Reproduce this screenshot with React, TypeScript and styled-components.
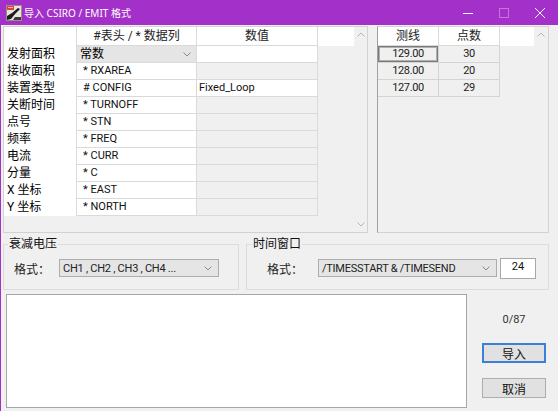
import React from "react";
import styled, { createGlobalStyle } from "styled-components";

const GlobalStyle = createGlobalStyle`
  html, body {
    margin: 0;
    padding: 0;
    background: #f0f0f0;
  }
  body {
    font-family: Roboto, "Noto Sans CJK SC", sans-serif;
    font-size: 12px;
    color: #000;
  }
  * {
    box-sizing: border-box;
  }
`;

const PURPLE = "#a230c9";

const Window = styled.div`
  width: 558px;
  height: 411px;
  border-left: 1px solid ${PURPLE};
  background: #f0f0f0;
  display: flex;
  flex-direction: column;
  overflow: hidden;
`;

const TitleBar = styled.div`
  height: 25px;
  flex: none;
  background: ${PURPLE};
  color: #fff;
  display: flex;
  align-items: center;
  padding-left: 5px;
`;

const TitleText = styled.span`
  margin-left: 2px;
  font-family: "Noto Sans", "Noto Sans CJK SC", sans-serif;
  font-size: 10px;
  line-height: 14px;
  flex: 1;
`;

const Controls = styled.div`
  display: flex;
  align-items: center;
  height: 100%;
`;

const ControlBtn = styled.div<{ $dim?: boolean }>`
  width: 36px;
  height: 100%;
  display: flex;
  align-items: center;
  justify-content: center;
  opacity: ${(p) => (p.$dim ? 0.35 : 1)};
`;

const Body = styled.div`
  flex: 1;
  padding: 1px 0 0 2px;
  display: flex;
  flex-direction: column;
`;

const TopRow = styled.div`
  display: flex;
  gap: 9px;
  height: 207px;
`;

const LeftGrid = styled.div`
  width: 365px;
  height: 100%;
  border: 1px solid #d2d2d2;
  background: #f0f0f0;
  display: flex;
`;

const RightGrid = styled.div`
  width: 172px;
  height: 100%;
  border: 1px solid #d2d2d2;
  border-left-color: #a0a0a0;
  background: #f0f0f0;
  display: flex;
`;

const TableArea = styled.div<{ $w: number }>`
  width: ${(p) => p.$w}px;
  display: flex;
  flex-direction: column;
`;

const TableRow = styled.div<{ $cols: string; $h: number }>`
  display: grid;
  grid-template-columns: ${(p) => p.$cols};
  height: ${(p) => p.$h}px;
`;

const HeadCell = styled.div<{ $noBottom?: boolean; $last?: boolean }>`
  background: #fff;
  border-right: ${(p) => (p.$last ? "none" : "1px solid #dadada")};
  border-bottom: ${(p) => (p.$noBottom ? "none" : "1px solid #dadada")};
  text-align: center;
  line-height: 18px;
  color: #222;
  white-space: nowrap;
`;

const LabelCell = styled.div`
  background: #fff;
  border-right: 1px solid #dadada;
  padding-left: 3px;
  line-height: 16px;
  white-space: nowrap;
`;

const FieldCell = styled.div`
  background: #fff;
  border-right: 1px solid #dadada;
  border-bottom: 1px solid #dadada;
  padding-left: 6px;
  font-size: 11px;
  line-height: 16px;
  color: #111;
  white-space: nowrap;
`;

const ValueCell = styled.div<{ $white?: boolean }>`
  background: ${(p) => (p.$white ? "#fff" : "#f0f0f0")};
  border-right: 1px solid #dadada;
  border-bottom: 1px solid #dadada;
  padding-left: 2px;
  font-size: 11px;
  line-height: 16px;
  color: #111;
  white-space: nowrap;
`;

const CellCombo = styled.div`
  background: #e5e5e5;
  border-right: 1px solid #dadada;
  border-bottom: 1px solid #dadada;
  display: flex;
  align-items: center;
  justify-content: space-between;
  padding: 0 5px 0 3px;
  line-height: 16px;
`;

const DataCell = styled.div<{ $selected?: boolean }>`
  background: #f0f0f0;
  border-right: 1px solid #d4d4d4;
  border-bottom: 1px solid #d4d4d4;
  text-align: center;
  font-size: 11px;
  letter-spacing: -0.4px;
  line-height: 16px;
  color: #222;
  box-shadow: ${(p) => (p.$selected ? "inset 0 0 0 1px #7a7a7a, inset 0 0 0 2px #b0b0b0" : "none")};
`;

const ScrollBar = styled.div<{ $w: number }>`
  width: ${(p) => p.$w}px;
  display: flex;
  flex-direction: column;
  justify-content: space-between;
  align-items: center;
  padding: 5px 0 5px;
`;

const GroupsRow = styled.div`
  display: flex;
  gap: 7px;
  margin-top: 4px;
`;

const Group = styled.fieldset<{ $w: number }>`
  width: ${(p) => p.$w}px;
  height: 53px;
  margin: 0;
  padding: 6px 0 0 0;
  border: 1px solid #dcdcdc;
  min-width: 0;
`;

const Legend = styled.legend`
  font-size: 12px;
  line-height: 14px;
  padding: 0 1px;
  margin-left: 4px;
  color: #111;
`;

const FieldRow = styled.div<{ $pl: number }>`
  display: flex;
  align-items: center;
  height: 22px;
  padding-left: ${(p) => p.$pl}px;
`;

const FieldLabel = styled.span<{ $w: number }>`
  width: ${(p) => p.$w}px;
  color: #222;
`;

const Combo = styled.div<{ $w: number }>`
  width: ${(p) => p.$w}px;
  height: 18px;
  background: #e5e5e5;
  border: 1px solid #adadad;
  display: flex;
  align-items: center;
  justify-content: space-between;
  padding: 0 6px 0 3px;
  font-size: 11px;
  letter-spacing: -0.25px;
  color: #222;
  white-space: nowrap;
  overflow: hidden;
`;

const NumBox = styled.div`
  width: 36px;
  height: 21px;
  margin-left: 3px;
  background: #fff;
  border: 1px solid #a8a8a8;
  text-align: center;
  font-size: 11px;
  line-height: 16px;
  color: #111;
`;

const BottomRow = styled.div`
  display: flex;
  margin-top: 4px;
`;

const LogBox = styled.div`
  width: 461px;
  height: 114px;
  margin-left: 3px;
  background: #fff;
  border: 1px solid #a6a6a6;
`;

const SidePanel = styled.div`
  width: 64px;
  margin-left: 15px;
  display: flex;
  flex-direction: column;
  align-items: center;
`;

const Counter = styled.div`
  margin-top: 18px;
  font-size: 11px;
  line-height: 16px;
  color: #333;
`;

const Button = styled.div<{ $primary?: boolean }>`
  width: 64px;
  height: 20px;
  margin-top: 15px;
  background: #e1e1e1;
  border: ${(p) => (p.$primary ? "2px solid #3b7fd6" : "1px solid #adadad")};
  display: flex;
  align-items: center;
  justify-content: center;
  color: #111;
`;

const Chevron = ({ up = false, color = "#8a8a8a" }: { up?: boolean; color?: string }) => (
  <svg width="8" height="5" viewBox="0 0 8 5">
    <polyline
      points={up ? "0.5,4.5 4,1 7.5,4.5" : "0.5,0.5 4,4 7.5,0.5"}
      fill="none"
      stroke={color}
      strokeWidth="1"
    />
  </svg>
);

const AppIcon = () => (
  <svg width="16" height="16" viewBox="0 0 16 16">
    <rect x="0.5" y="0.5" width="15" height="15" fill="#e8e4e0" stroke="#9a8f86" />
    <rect x="1" y="1" width="7" height="4" fill="#d8433a" />
    <rect x="2" y="2" width="5" height="1" fill="#f6c0b0" />
    <path d="M1 15 L1 11 L6 8 L12 3 L14 4 L9 9 L5 14 Z" fill="#1c1c1c" />
    <path d="M9 12 L15 12 L15 15 L7 15 Z" fill="#3a3a3a" />
  </svg>
);

const leftRows: { label: string; field: string; value?: string; white?: boolean; combo?: boolean }[] = [
  { label: "发射面积", field: "常数", combo: true, white: true },
  { label: "接收面积", field: "* RXAREA" },
  { label: "装置类型", field: "# CONFIG", value: "Fixed_Loop", white: true },
  { label: "关断时间", field: "* TURNOFF" },
  { label: "点号", field: "* STN" },
  { label: "频率", field: "* FREQ" },
  { label: "电流", field: "* CURR" },
  { label: "分量", field: "* C" },
  { label: "X 坐标", field: "* EAST" },
  { label: "Y 坐标", field: "* NORTH" },
];

const lines = [
  { line: "129.00", count: "30" },
  { line: "128.00", count: "20" },
  { line: "127.00", count: "29" },
];

export default function App() {
  return (
    <>
      <GlobalStyle />
      <Window>
        <TitleBar>
          <AppIcon />
          <TitleText>导入 CSIRO / EMIT 格式</TitleText>
          <Controls>
            <ControlBtn>
              <svg width="10" height="10" viewBox="0 0 10 10">
                <line x1="0" y1="5.5" x2="10" y2="5.5" stroke="#fff" strokeWidth="1" />
              </svg>
            </ControlBtn>
            <ControlBtn $dim>
              <svg width="10" height="10" viewBox="0 0 10 10">
                <rect x="0.5" y="0.5" width="9" height="9" fill="none" stroke="#fff" strokeWidth="1" />
              </svg>
            </ControlBtn>
            <ControlBtn>
              <svg width="10" height="10" viewBox="0 0 10 10">
                <path d="M0 0 L10 10 M10 0 L0 10" stroke="#fff" strokeWidth="1" />
              </svg>
            </ControlBtn>
          </Controls>
        </TitleBar>

        <Body>
          <TopRow>
            <LeftGrid>
              <TableArea $w={350}>
                <TableRow $cols="73px 120px 121px 36px" $h={19}>
                  <HeadCell $noBottom />
                  <HeadCell>#表头 / * 数据列</HeadCell>
                  <HeadCell>数值</HeadCell>
                  <HeadCell $noBottom $last />
                </TableRow>
                {leftRows.map((r) => (
                  <TableRow key={r.label} $cols="73px 120px 121px" $h={17}>
                    <LabelCell>{r.label}</LabelCell>
                    {r.combo ? (
                      <CellCombo>
                        <span>{r.field}</span>
                        <Chevron />
                      </CellCombo>
                    ) : (
                      <FieldCell>{r.field}</FieldCell>
                    )}
                    <ValueCell $white={r.white}>{r.value}</ValueCell>
                  </TableRow>
                ))}
              </TableArea>
              <ScrollBar $w={13}>
                <Chevron up color="#b4b4b4" />
                <Chevron color="#b4b4b4" />
              </ScrollBar>
            </LeftGrid>

            <RightGrid>
              <TableArea $w={156}>
                <TableRow $cols="61px 61px 34px" $h={19}>
                  <HeadCell>测线</HeadCell>
                  <HeadCell>点数</HeadCell>
                  <HeadCell $noBottom $last />
                </TableRow>
                {lines.map((l, i) => (
                  <TableRow key={l.line} $cols="61px 61px" $h={17}>
                    <DataCell $selected={i === 0}>{l.line}</DataCell>
                    <DataCell>{l.count}</DataCell>
                  </TableRow>
                ))}
              </TableArea>
              <ScrollBar $w={14}>
                <Chevron up color="#b4b4b4" />
                <span />
              </ScrollBar>
            </RightGrid>
          </TopRow>

          <GroupsRow>
            <Group $w={236}>
              <Legend>衰减电压</Legend>
              <FieldRow $pl={10}>
                <FieldLabel $w={45}>格式：</FieldLabel>
                <Combo $w={160}>
                  <span>CH1 , CH2 , CH3 , CH4 ...</span>
                  <Chevron />
                </Combo>
              </FieldRow>
            </Group>
            <Group $w={303}>
              <Legend style={{ marginLeft: 5 }}>时间窗口</Legend>
              <FieldRow $pl={20}>
                <FieldLabel $w={51}>格式：</FieldLabel>
                <Combo $w={179}>
                  <span>/TIMESSTART &amp; /TIMESEND</span>
                  <Chevron />
                </Combo>
                <NumBox>24</NumBox>
              </FieldRow>
            </Group>
          </GroupsRow>

          <BottomRow>
            <LogBox />
            <SidePanel>
              <Counter>0/87</Counter>
              <Button $primary>导入</Button>
              <Button>取消</Button>
            </SidePanel>
          </BottomRow>
        </Body>
      </Window>
    </>
  );
}
